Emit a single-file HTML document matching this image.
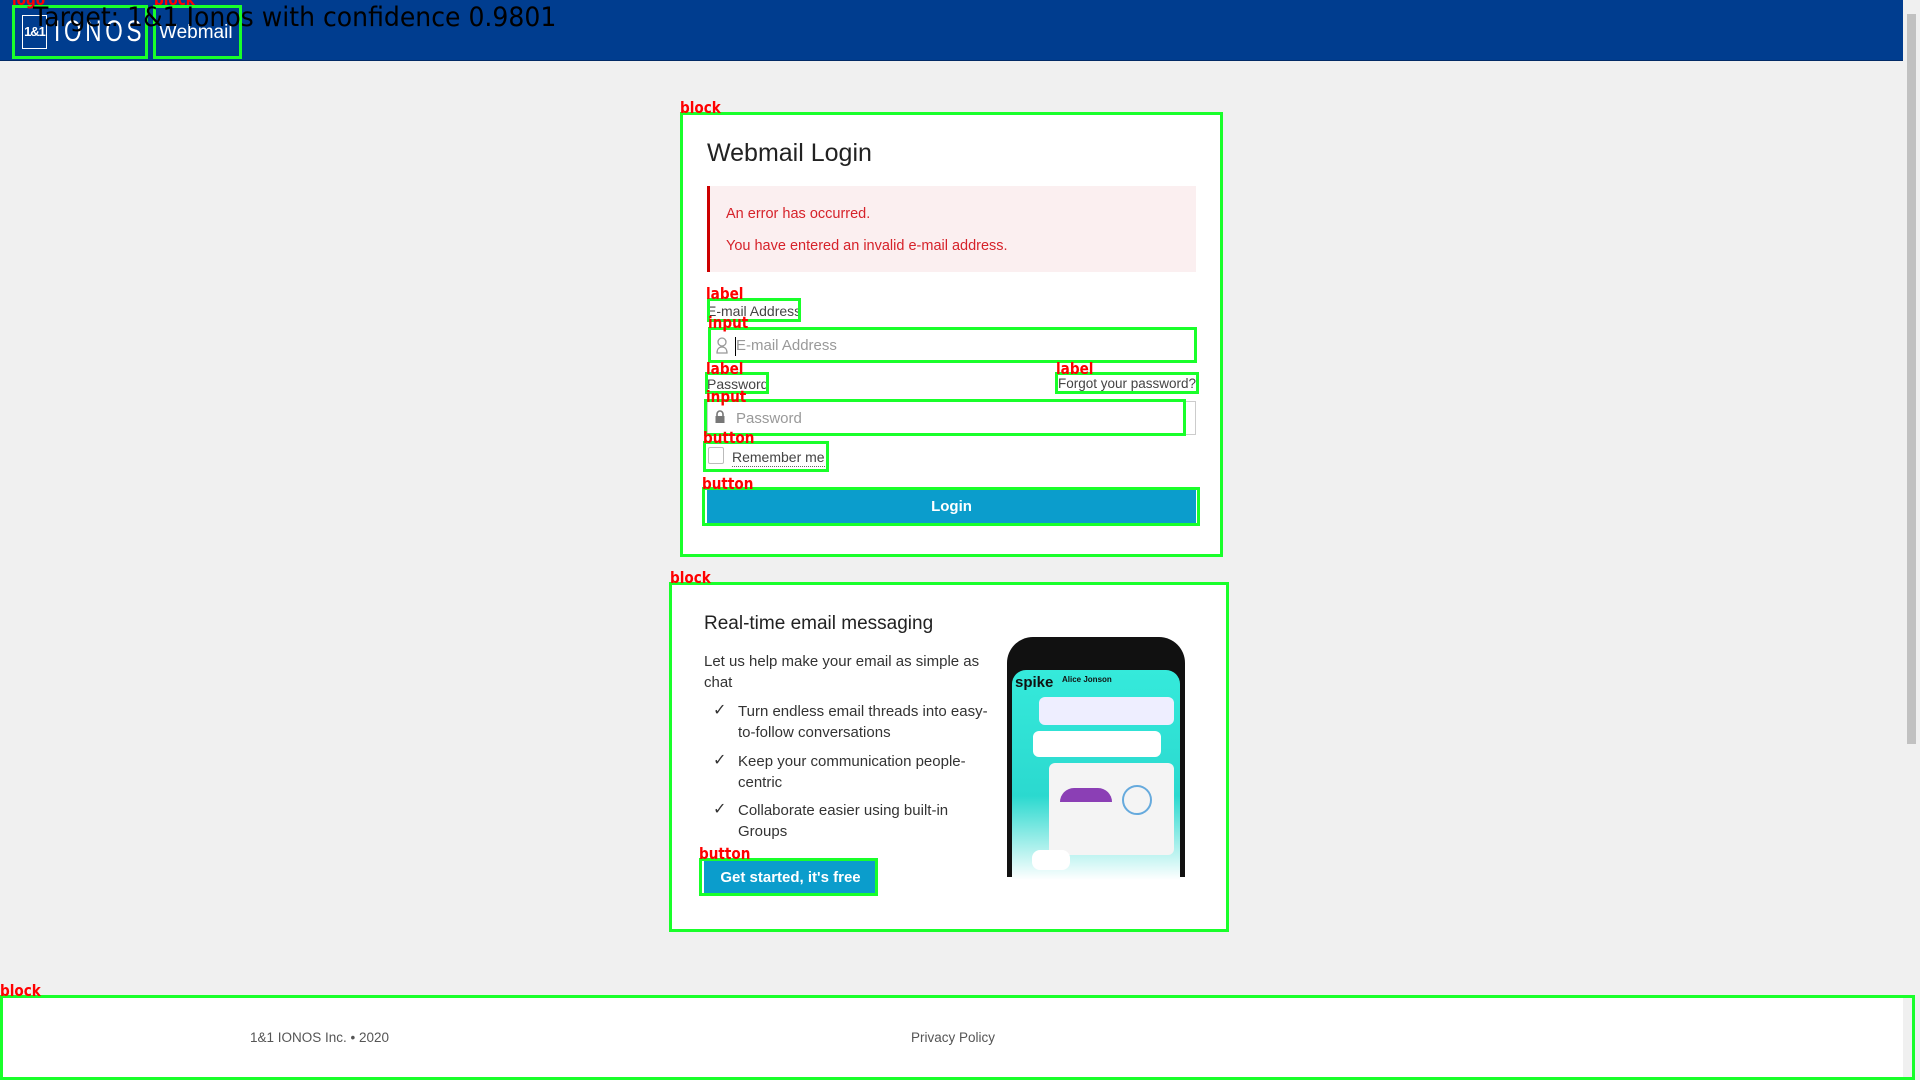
<!DOCTYPE html>
<html><head><meta charset="utf-8"><style>
*{box-sizing:border-box;margin:0;padding:0}
body{width:1920px;height:1080px;background:#f0f0f0;font-family:"Liberation Sans",sans-serif;position:relative;overflow:hidden;color:#333}
.a{position:absolute}
.g{position:absolute;border:3px solid #19ff2a}
.r{position:absolute;color:#f00;font-weight:bold;font-size:16px;line-height:16px;font-family:"DejaVu Sans",sans-serif;transform:scaleX(0.85);transform-origin:left}
.lbl{font-size:14px;color:#444}
.inp{position:absolute;background:#fff;border:1px solid #ccc}
.ph{color:#999;font-size:15px}
.body{font-size:15px;color:#333;line-height:21px}
.chk{font-size:16px;color:#333}
</style></head><body>
<div class="a" style="left:0;top:0;width:1903px;height:61px;background:#003d8f;border-bottom:1px solid #022a66"></div>
<div class="a" style="left:1903px;top:0;width:17px;height:1080px;background:#f0f0f0"></div>
<div class="a" style="left:1907px;top:14px;width:9px;height:730px;background:#c1c1c1"></div>
<!-- logo -->
<div class="a" style="left:22px;top:15px;width:25px;height:34px;border:1px solid #fff;color:#fff;font-size:13px;font-weight:bold;line-height:32px;text-align:center;letter-spacing:-1px">1&amp;1</div>
<div class="a" style="left:54px;top:14px;color:#fff;font-size:30px;line-height:36px;letter-spacing:5px;transform:scaleX(0.75);transform-origin:left">IONOS</div>
<div class="a" style="left:159px;top:21px;color:#fff;font-size:19px;line-height:24px">Webmail</div>

<!-- card 1 -->
<div class="a" style="left:680px;top:113px;width:542px;height:443px;background:#fff"></div>
<div class="a" style="left:707px;top:137px;font-size:25px;color:#222;line-height:32px">Webmail Login</div>
<div class="a" style="left:707px;top:186px;width:489px;height:86px;background:#fbeff0;border-left:3px solid #c00"></div>
<div class="a" style="left:726px;top:206px;font-size:14.5px;color:#d6222a">An error has occurred.</div>
<div class="a" style="left:726px;top:238px;font-size:14.5px;color:#d6222a">You have entered an invalid e-mail address.</div>
<div class="a lbl" style="left:707px;top:303px">E-mail Address</div>
<div class="inp" style="left:708px;top:329px;width:488px;height:34px;border-color:#e88"></div>
<svg class="a" style="left:714px;top:336px" width="16" height="20" viewBox="0 0 16 20"><circle cx="8" cy="6" r="4" fill="none" stroke="#999" stroke-width="1.3"/><path d="M3 17c0-4 2-6 5-6s5 2 5 6z" fill="none" stroke="#999" stroke-width="1.3"/></svg>
<div class="a" style="left:735px;top:337px;width:1px;height:19px;background:#000"></div>
<div class="a ph" style="left:736px;top:337px">E-mail Address</div>
<div class="a lbl" style="left:707px;top:376px">Password</div>
<div class="a lbl" style="left:1058px;top:376px;font-size:13.5px">Forgot your password?</div>
<div class="inp" style="left:707px;top:401px;width:489px;height:34px"></div>
<svg class="a" style="left:714px;top:410px" width="12" height="14" viewBox="0 0 12 14"><path d="M3 6V4a3 3 0 0 1 6 0v2" fill="none" stroke="#777" stroke-width="1.6"/><rect x="1.5" y="6" width="9" height="7" fill="#777"/></svg>
<div class="a ph" style="left:736px;top:410px">Password</div>
<div class="a" style="left:708px;top:447px;width:16px;height:17px;border:1px solid #bbb;border-radius:2px;background:#fff"></div>
<div class="a" style="left:732px;top:449px;font-size:14px;color:#444;border-bottom:1px dotted #666;line-height:17px">Remember me</div>
<div class="a" style="left:707px;top:489px;width:489px;height:35px;background:#0b9dcc;color:#fff;font-weight:bold;font-size:15px;line-height:35px;text-align:center">Login</div>

<!-- card 2 -->
<div class="a" style="left:670px;top:583px;width:558px;height:348px;background:#fff"></div>
<div class="a" style="left:704px;top:613px;font-size:19px;color:#222">Real-time email messaging</div>
<div class="a body" style="left:704px;top:651px;width:290px">Let us help make your email as simple as chat</div>
<div class="a chk" style="left:713px;top:700px">✓</div>
<div class="a body" style="left:738px;top:701px;width:250px">Turn endless email threads into easy-to-follow conversations</div>
<div class="a chk" style="left:713px;top:750px">✓</div>
<div class="a body" style="left:738px;top:751px;width:240px">Keep your communication people-centric</div>
<div class="a chk" style="left:713px;top:799px">✓</div>
<div class="a body" style="left:738px;top:800px;width:240px">Collaborate easier using built-in Groups</div>
<div class="a" style="left:704px;top:861px;width:173px;height:33px;background:#0b9dcc;color:#fff;font-weight:bold;font-size:15px;line-height:33px;text-align:center">Get started, it's free</div>
<!-- phone -->
<div class="a" style="left:1007px;top:637px;width:178px;height:240px;background:#111;border-radius:26px 26px 0 0"></div>
<div class="a" style="left:1012px;top:670px;width:168px;height:210px;border-radius:14px 14px 0 0;background:linear-gradient(#35eadb,#2bd9cf 60%,#fff 100%)"></div>
<div class="a" style="left:1015px;top:674px;font-weight:bold;font-size:15px;color:#111">spike</div>
<div class="a" style="left:1062px;top:675px;font-size:8px;color:#111;font-weight:bold">Alice Jonson</div>
<div class="a" style="left:1039px;top:697px;width:135px;height:28px;background:#eef;border-radius:6px"></div>
<div class="a" style="left:1033px;top:731px;width:128px;height:26px;background:#fff;border-radius:6px"></div>
<div class="a" style="left:1049px;top:763px;width:125px;height:92px;background:#f4f4f4;border-radius:6px"></div>
<div class="a" style="left:1060px;top:788px;width:52px;height:14px;background:#8b3fb5;border-radius:20px 20px 0 0"></div>
<div class="a" style="left:1122px;top:785px;width:30px;height:30px;border:2px solid #6ad;border-radius:50%"></div>
<div class="a" style="left:1032px;top:850px;width:38px;height:20px;background:#fff;border-radius:8px"></div>

<!-- footer -->
<div class="a" style="left:0;top:995px;width:1903px;height:85px;background:#fff"></div>
<div class="a" style="left:250px;top:1030px;font-size:13.5px;color:#555">1&amp;1 IONOS Inc. • 2020</div>
<div class="a" style="left:911px;top:1030px;font-size:13.5px;color:#555">Privacy Policy</div>

<!-- annotations -->
<div class="g" style="left:12px;top:5px;width:136px;height:54px"></div>
<div class="g" style="left:153px;top:5px;width:89px;height:54px"></div>
<div class="g" style="left:680px;top:112px;width:543px;height:445px"></div>
<div class="g" style="left:707px;top:298px;width:94px;height:24px"></div>
<div class="g" style="left:708px;top:327px;width:489px;height:36px"></div>
<div class="g" style="left:705px;top:372px;width:64px;height:22px"></div>
<div class="g" style="left:1055px;top:372px;width:144px;height:22px"></div>
<div class="g" style="left:704px;top:399px;width:482px;height:37px"></div>
<div class="g" style="left:703px;top:441px;width:126px;height:31px"></div>
<div class="g" style="left:702px;top:487px;width:498px;height:39px"></div>
<div class="g" style="left:669px;top:582px;width:560px;height:350px"></div>
<div class="g" style="left:699px;top:858px;width:179px;height:38px"></div>
<div class="g" style="left:0;top:995px;width:1915px;height:85px"></div>
<div class="r" style="left:12px;top:-8px">logo</div>
<div class="r" style="left:154px;top:-8px">block</div>
<div class="r" style="left:680px;top:100px">block</div>
<div class="r" style="left:706px;top:286px">label</div>
<div class="r" style="left:708px;top:315px">input</div>
<div class="r" style="left:706px;top:361px">label</div>
<div class="r" style="left:1056px;top:361px">label</div>
<div class="r" style="left:706px;top:389px">input</div>
<div class="r" style="left:703px;top:430px">button</div>
<div class="r" style="left:702px;top:476px">button</div>
<div class="r" style="left:670px;top:570px">block</div>
<div class="r" style="left:699px;top:846px">button</div>
<div class="r" style="left:0;top:983px">block</div>
<div class="a" style="left:33px;top:2px;font-family:'DejaVu Sans','Liberation Sans',sans-serif;font-size:27px;color:#000;line-height:32px;transform:scaleX(0.93);transform-origin:left">Target: 1&amp;1 Ionos with confidence 0.9801</div>
</body></html>
